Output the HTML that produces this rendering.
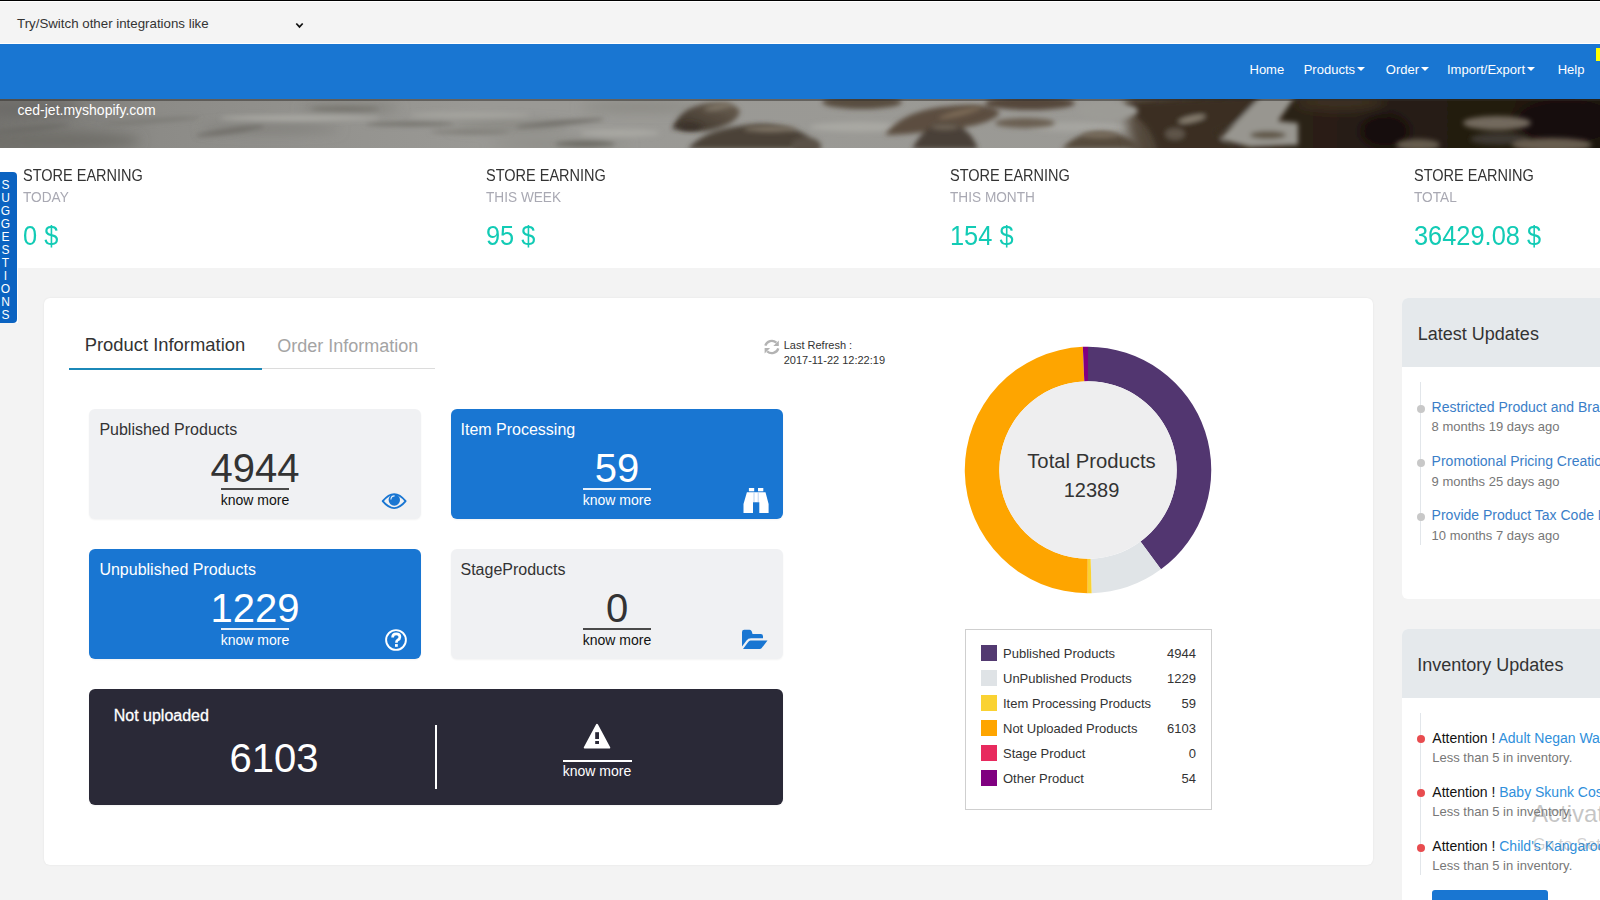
<!DOCTYPE html>
<html><head><meta charset="utf-8">
<style>
*{margin:0;padding:0;box-sizing:border-box}
html,body{width:1600px;height:900px;overflow:hidden;background:#fff;font-family:"Liberation Sans",sans-serif;color:#333}
.a{position:absolute;white-space:nowrap;line-height:1}
#topline{position:absolute;left:0;top:0;width:1600px;height:1px;background:#000}
#topbar{position:absolute;left:0;top:2px;width:1600px;height:41px;background:#f4f4f4}
#nav{position:absolute;left:0;top:44px;width:1600px;height:55px;background:#1976d2}
#banner{position:absolute;left:0;top:99px;width:1600px;height:49px;overflow:hidden;background:#8f8e89}
#graybg{position:absolute;left:18px;top:268px;width:1582px;height:632px;background:#f3f3f3}
#bottomgray{position:absolute;left:0;top:323px;width:18px;height:577px;background:#f3f3f3}
.nav{color:#fff;font-size:13px;top:62.6px}
.caret{display:inline-block;width:0;height:0;border-left:4px solid transparent;border-right:4px solid transparent;border-top:4px solid #fff;vertical-align:middle;margin-left:2px;position:relative;top:-1px}
.etitle{font-size:16px;top:168px;color:#333;transform-origin:0 0;transform:scaleX(0.907)}
.esub{font-size:15px;top:189.3px;color:#a9a9b3;transform-origin:0 0;transform:scaleX(0.91)}
.eval{font-size:27px;top:222.9px;color:#12cbb5;transform-origin:0 0;transform:scaleX(0.94)}
#sugg{position:absolute;left:0;top:172px;width:17.3px;height:151px;background:#0b63c1;border-radius:0 4px 4px 0}
.sl{position:absolute;left:-3.5px;width:18px;text-align:center;color:#fff;font-size:12px;line-height:1}
#card{position:absolute;left:44px;top:298px;width:1329px;height:567px;background:#fff;border-radius:6px;box-shadow:0 0 2px rgba(0,0,0,0.08)}
.box{position:absolute;border-radius:6px;box-shadow:0 1px 2px rgba(0,0,0,0.05)}
.gbox{background:#f0f1f3;color:#333}
.bbox{background:#1976d2;color:#fff}
.btitle{font-size:16px}
.gbox~.btitle{}
.bnum{font-size:40px;text-align:center}
.bmore{font-size:14px;text-align:center}
.legsq{position:absolute;left:981px;width:16px;height:16px}
.legl{font-size:13px;left:1003px;color:#333}
.legn{font-size:13px;color:#333;text-align:right;width:80px;left:1116px}
#upd1{position:absolute;left:1402px;top:298px;width:220px;height:301px;background:#fff;border-radius:6px 0 0 6px;overflow:hidden}
#upd2{position:absolute;left:1402px;top:629px;width:220px;height:300px;background:#fff;border-radius:6px 0 0 6px;overflow:hidden}
.uhead{position:absolute;left:0;top:0;width:100%;height:69px;background:#e5e9ec}
.utitle{font-size:18px;color:#333}
.ulink{font-size:14px;color:#3a7ec8}
.utime{font-size:13px;color:#777}
.dot{position:absolute;width:8px;height:8px;border-radius:50%}
</style></head><body>
<div id="topline"></div>
<div id="topbar"></div>
<div class="a" style="left:17px;top:16.7px;font-size:13.3px;color:#333">Try/Switch other integrations like</div>
<svg class="a" style="left:295px;top:22.3px" width="9" height="7" viewBox="0 0 9 7"><path d="M1.3 1.5 L4.5 4.9 L7.7 1.5" stroke="#111" stroke-width="1.7" fill="none"/></svg>

<div id="nav"></div>
<div class="a nav" style="left:1249.5px">Home</div>
<div class="a nav" style="left:1303.7px">Products<span class="caret"></span></div>
<div class="a nav" style="left:1385.8px">Order<span class="caret"></span></div>
<div class="a nav" style="left:1447px">Import/Export<span class="caret"></span></div>
<div class="a nav" style="left:1557.7px">Help</div>
<div class="a" style="left:1595.7px;top:48.3px;width:5px;height:12.5px;background:#ffff00"></div>

<div id="banner"><!--B--><svg width="1600" height="49" viewBox="0 0 1600 49" style="display:block">
<defs>
<filter id="b2" filterUnits="userSpaceOnUse" x="-50" y="-50" width="1700" height="150"><feGaussianBlur stdDeviation="2.5"/></filter>
<filter id="b4" filterUnits="userSpaceOnUse" x="-50" y="-50" width="1700" height="150"><feGaussianBlur stdDeviation="4"/></filter>
<filter id="b6" filterUnits="userSpaceOnUse" x="-50" y="-50" width="1700" height="150"><feGaussianBlur stdDeviation="6"/></filter>
<linearGradient id="lg" x1="0" x2="1" y1="0" y2="0">
<stop offset="0" stop-color="#74736f"/><stop offset="0.1" stop-color="#8c8b87"/><stop offset="0.3" stop-color="#9a9995"/><stop offset="1" stop-color="#9b9a95"/>
</linearGradient>
<linearGradient id="rk" x1="0" x2="1" y1="1" y2="0">
<stop offset="0" stop-color="#3a3128"/><stop offset="1" stop-color="#6b6052"/>
</linearGradient>
<linearGradient id="rg" gradientUnits="userSpaceOnUse" x1="1125" x2="1600" y1="0" y2="0"><stop offset="0" stop-color="#5a4f42"/><stop offset="0.16" stop-color="#3e3327"/><stop offset="0.36" stop-color="#2a2015"/><stop offset="1" stop-color="#1f170e"/></linearGradient>
</defs>
<rect width="1600" height="49" fill="url(#lg)"/>
<g filter="url(#b6)">
<ellipse cx="50" cy="42" rx="90" ry="9" fill="#6f6e69"/>
<ellipse cx="30" cy="10" rx="50" ry="8" fill="#6c6b67"/>
<ellipse cx="270" cy="30" rx="70" ry="4" fill="#7f7e79"/>
<ellipse cx="350" cy="9" rx="50" ry="4" fill="#7e7d77"/>
<ellipse cx="510" cy="27" rx="60" ry="4" fill="#83827c"/>
<ellipse cx="640" cy="8" rx="60" ry="4" fill="#878680"/>
<ellipse cx="560" cy="45" rx="70" ry="4" fill="#8b8a84"/>
</g>
<g filter="url(#b2)">
<ellipse cx="30" cy="30" rx="40" ry="2.5" fill="#6c6b66" transform="rotate(-6 30 30)"/>
<ellipse cx="150" cy="22" rx="50" ry="2" fill="#7a7974" transform="rotate(-4 150 22)"/>
<ellipse cx="230" cy="32" rx="35" ry="2.5" fill="#6f6d68" transform="rotate(-8 230 32)"/>
<ellipse cx="345" cy="10" rx="35" ry="2" fill="#73716b"/>
<ellipse cx="410" cy="25" rx="45" ry="2" fill="#706e68"/>
<ellipse cx="470" cy="33" rx="40" ry="2" fill="#7e7c76"/>
<ellipse cx="560" cy="24" rx="45" ry="2.2" fill="#6e6c66" transform="rotate(-5 560 24)"/>
<ellipse cx="585" cy="45" rx="30" ry="3" fill="#6c6a64"/>
<ellipse cx="300" cy="19" rx="80" ry="3" fill="#a9a8a3"/>
<ellipse cx="470" cy="16" rx="60" ry="3" fill="#a5a49f"/>
<ellipse cx="620" cy="34" rx="40" ry="4" fill="#a8a7a2"/>
<ellipse cx="860" cy="28" rx="50" ry="5" fill="#a9a8a3"/>
<ellipse cx="1080" cy="28" rx="50" ry="5" fill="#a6a5a0"/>
</g>
<g filter="url(#b2)">
<path d="M672 30 Q680 8 708 4 Q735 2 740 12 Q738 26 705 32 Z" fill="url(#rk)"/>
<path d="M688 50 Q705 28 760 25 Q805 26 822 50 Z" fill="#4b4238"/>
<ellipse cx="806" cy="47" rx="15" ry="9" fill="#5a5147"/>
<ellipse cx="862" cy="3" rx="40" ry="7" fill="#594e41"/>
<path d="M885 36 Q900 14 940 8 Q990 2 1000 14 Q990 28 930 32 Q905 36 885 36Z" fill="#5b4e3f"/>
<path d="M912 50 Q925 25 945 24 Q970 26 978 50Z" fill="#4a4138"/>
<ellipse cx="1030" cy="4" rx="45" ry="7" fill="#54473a"/>
<ellipse cx="1025" cy="24" rx="30" ry="5" fill="#6a5f51"/>
<path d="M1062 50 Q1075 34 1100 33 Q1130 34 1142 50Z" fill="#574b3d"/>
</g>
<g filter="url(#b6)">
<path d="M1128 -20 L1650 -20 L1650 70 L1140 70 Q1122 30 1128 -20Z" fill="url(#rg)"/>
<ellipse cx="1340" cy="3" rx="45" ry="8" fill="#3d3024"/>
<ellipse cx="1565" cy="22" rx="50" ry="22" fill="#130d08"/>
<ellipse cx="1385" cy="32" rx="25" ry="18" fill="#150f09"/>

</g>
<g filter="url(#b2)">
<path d="M1125 4 L1262 -2 L1240 22 L1214 33 L1232 52 L1158 52 Q1150 22 1125 11 Z" fill="#3a2f24"/><ellipse cx="1192" cy="20" rx="14" ry="3" fill="#8a8172" transform="rotate(-12 1192 20)"/><ellipse cx="1175" cy="35" rx="10" ry="6" fill="#5e5549"/>
<path d="M1262 -4 L1296 -4 L1278 22 L1298 24 L1298 46 L1250 48 L1220 40 Z" fill="#989690"/>
<ellipse cx="1268" cy="36" rx="18" ry="4" fill="#5e5444"/>
<ellipse cx="1497" cy="24" rx="34" ry="7" fill="#72695d"/>
<ellipse cx="1500" cy="40" rx="30" ry="6" fill="#3c3833"/>
<ellipse cx="1418" cy="46" rx="22" ry="6" fill="#655b4d"/>
<ellipse cx="1552" cy="46" rx="40" ry="7" fill="#675d4f"/>
</g>
<g filter="url(#b2)">
<ellipse cx="718" cy="8" rx="14" ry="3" fill="#7e7466" transform="rotate(-10 718 8)"/>
<ellipse cx="770" cy="30" rx="26" ry="3" fill="#7f7566"/>
<ellipse cx="690" cy="28" rx="12" ry="4" fill="#3b332b"/>
<ellipse cx="945" cy="28" rx="14" ry="3" fill="#6f6557"/>
<ellipse cx="960" cy="14" rx="22" ry="3" fill="#7b6b57" transform="rotate(-14 960 14)"/>
<ellipse cx="1100" cy="36" rx="18" ry="3" fill="#7a6e5e"/>
<ellipse cx="1108" cy="12" rx="30" ry="9" fill="#9c9b96"/>
</g>
<rect width="1600" height="2" fill="#2f2c28" opacity="0.5"/>
</svg><!--/B-->
</div>
<div class="a" style="left:17.5px;top:102.6px;font-size:14px;color:#fff">ced-jet.myshopify.com</div>

<div class="a etitle" style="left:23px">STORE EARNING</div>
<div class="a esub" style="left:23px">TODAY</div>
<div class="a eval" style="left:23px">0 $</div>
<div class="a etitle" style="left:485.8px">STORE EARNING</div>
<div class="a esub" style="left:485.8px">THIS WEEK</div>
<div class="a eval" style="left:485.8px">95 $</div>
<div class="a etitle" style="left:950px">STORE EARNING</div>
<div class="a esub" style="left:950px">THIS MONTH</div>
<div class="a eval" style="left:950px">154 $</div>
<div class="a etitle" style="left:1414px">STORE EARNING</div>
<div class="a esub" style="left:1414px">TOTAL</div>
<div class="a eval" style="left:1414px">36429.08 $</div>

<div id="graybg"></div>
<div id="bottomgray"></div>
<div id="sugg">
<div class="sl" style="top:7px">S</div>
<div class="sl" style="top:20px">U</div>
<div class="sl" style="top:33px">G</div>
<div class="sl" style="top:46px">G</div>
<div class="sl" style="top:59px">E</div>
<div class="sl" style="top:72px">S</div>
<div class="sl" style="top:85px">T</div>
<div class="sl" style="top:98px">I</div>
<div class="sl" style="top:111px">O</div>
<div class="sl" style="top:124px">N</div>
<div class="sl" style="top:137px">S</div>
</div>

<div id="card"></div>
<!-- tabs -->
<div class="a" style="left:84.7px;top:336.3px;font-size:18.4px;color:#333">Product Information</div>
<div class="a" style="left:277.2px;top:336.7px;font-size:18px;color:#a4a4a4">Order Information</div>
<div class="a" style="left:69px;top:368px;width:366px;height:1px;background:#dcdcdc"></div>
<div class="a" style="left:69px;top:368px;width:193px;height:2px;background:#1b88b8"></div>

<!-- last refresh -->
<svg class="a" style="left:760px;top:336px" width="24" height="22" viewBox="0 0 24 22"><path d="M5.3 9.7 A6.8 6.8 0 0 1 16.4 6.6" stroke="#b3b3b3" stroke-width="2.3" fill="none"/><path d="M18.8 4.4 V9.9 H13.3Z" fill="#b3b3b3"/><path d="M18.3 12.3 A6.8 6.8 0 0 1 7.2 15.4" stroke="#b3b3b3" stroke-width="2.3" fill="none"/><path d="M4.6 12.1 H10.1 L4.6 17.6Z" fill="#b3b3b3"/></svg>
<div class="a" style="left:783.7px;top:340px;font-size:11px;color:#333">Last Refresh :</div>
<div class="a" style="left:783.7px;top:355.3px;font-size:11px;color:#333">2017-11-22 12:22:19</div>

<!-- boxes -->
<div class="box gbox" style="left:89px;top:409px;width:332px;height:110px"></div>
<div class="a btitle" style="left:99.4px;top:421.5px;color:#333">Published Products</div>
<div class="a bnum" style="left:155px;top:448.1px;width:200px;color:#333">4944</div>
<div class="a" style="left:221px;top:488px;width:68px;height:2px;background:#4a4a4a"></div>
<div class="a bmore" style="left:205px;top:492.7px;width:100px;color:#111">know more</div>
<svg class="a" style="left:376px;top:486px" width="36" height="30" viewBox="0 0 36 30"><path d="M6.7 15.2 Q18.2 1.0 29.6 15.2 Q18.2 29.0 6.7 15.2Z" fill="none" stroke="#1976d2" stroke-width="1.9" stroke-linejoin="round"/><circle cx="18.3" cy="14" r="5.7" fill="#1976d2"/><path d="M14.9 13.6 A3.8 3.8 0 0 1 18.6 9.9" fill="none" stroke="#fff" stroke-width="1.1" opacity="0.9"/></svg>

<div class="box bbox" style="left:451px;top:409px;width:332px;height:110px"></div>
<div class="a btitle" style="left:460.5px;top:421.5px;color:#fff">Item Processing</div>
<div class="a bnum" style="left:517px;top:448.1px;width:200px;color:#fff">59</div>
<div class="a" style="left:583px;top:488px;width:68px;height:2px;background:rgba(255,255,255,0.9)"></div>
<div class="a bmore" style="left:567px;top:492.7px;width:100px;color:#fff">know more</div>
<svg class="a" style="left:740px;top:485px" width="30" height="30" viewBox="0 0 30 30"><rect x="8.9" y="3" width="5.3" height="3.3" fill="#fff"/><rect x="18" y="3" width="5.3" height="3.3" fill="#fff"/><path d="M6.9 7.2 H25.5 L28.6 19 V28 H19.3 V17.2 H13 V28 H3.5 V19 Z" fill="#fff"/><path d="M14 7.5V17M18.2 7.5V17" stroke="#9cc0ec" stroke-width="0.7"/></svg>

<div class="box bbox" style="left:89px;top:549px;width:332px;height:110px"></div>
<div class="a btitle" style="left:99.4px;top:561.5px;color:#fff">Unpublished Products</div>
<div class="a bnum" style="left:155px;top:588.2px;width:200px;color:#fff">1229</div>
<div class="a" style="left:221px;top:628px;width:68px;height:2px;background:rgba(255,255,255,0.9)"></div>
<div class="a bmore" style="left:205px;top:632.7px;width:100px;color:#fff">know more</div>
<svg class="a" style="left:384px;top:628.4px" width="24" height="24" viewBox="-12 -12 24 24"><circle r="9.9" fill="none" stroke="#fff" stroke-width="1.9"/><path d="M-3.4 -2.6 Q-3.4 -6.2 0.2 -6.2 Q3.9 -6.2 3.9 -3.1 Q3.9 -1.1 1.6 0.1 Q0.4 0.8 0.4 2.8" fill="none" stroke="#fff" stroke-width="2.7"/><rect x="-1.0" y="4.1" width="2.8" height="2.7" fill="#fff"/></svg>

<div class="box gbox" style="left:451px;top:549px;width:332px;height:110px"></div>
<div class="a btitle" style="left:460.5px;top:561.5px;color:#333">StageProducts</div>
<div class="a bnum" style="left:517px;top:588.2px;width:200px;color:#333">0</div>
<div class="a" style="left:583px;top:628px;width:68px;height:2px;background:#4a4a4a"></div>
<div class="a bmore" style="left:567px;top:632.7px;width:100px;color:#111">know more</div>
<svg class="a" style="left:735px;top:622px" width="40" height="34" viewBox="0 0 40 34"><path d="M7 10 Q7 7.7 9.3 7.7 H14.5 Q16.7 7.7 17.5 11.9 H25.8 Q28 11.9 28 14.3 V16.3 H16 Q13 16.3 11.5 18.5 L7 24.5 Z" fill="#1976d2"/><path d="M15.5 18.6 H32.5 L26.5 26.3 Q25.8 27 24.8 27 H8 L13 20.2 Q14 18.6 15.5 18.6 Z" fill="#1976d2"/></svg>

<div class="box" style="left:89px;top:689px;width:694px;height:116px;background:#2a2937"></div>
<div class="a" style="left:113.7px;top:707.5px;font-size:16px;color:#fff;-webkit-text-stroke:0.3px #fff">Not uploaded</div>
<div class="a bnum" style="left:174px;top:737.9px;width:200px;color:#fff">6103</div>
<div class="a" style="left:435px;top:725px;width:1.5px;height:63.5px;background:#fff"></div>
<svg class="a" style="left:583px;top:723px" width="28" height="26" viewBox="0 0 28 26"><path d="M14 1.8 L26.3 24.6 H1.7Z" fill="#fff" stroke="#fff" stroke-linejoin="round" stroke-width="2"/><rect x="12.2" y="9.2" width="3.8" height="6.8" fill="#2a2937"/><rect x="12.2" y="18" width="3.8" height="3" fill="#2a2937"/></svg>
<div class="a" style="left:563px;top:760px;width:68.5px;height:1.5px;background:#fff"></div>
<div class="a bmore" style="left:547px;top:763.8px;width:100px;color:#fff">know more</div>

<!-- donut -->
<svg class="a" style="left:960.35px;top:342.4px" width="256" height="256" viewBox="-128 -128 256 256"><path d="M0.00 -123.25A123.25 123.25 0 0 1 72.97 99.33L52.51 71.49A88.7 88.7 0 0 0 0.00 -88.70Z" fill="#523670"/><path d="M72.97 99.33A123.25 123.25 0 0 1 3.66 123.20L2.63 88.66A88.7 88.7 0 0 0 52.51 71.49Z" fill="#e0e4e7"/><path d="M3.66 123.20A123.25 123.25 0 0 1 -0.43 123.25L-0.31 88.70A88.7 88.7 0 0 0 2.63 88.66Z" fill="#fad232"/><path d="M-0.43 123.25A123.25 123.25 0 0 1 -5.16 -123.14L-3.71 -88.62A88.7 88.7 0 0 0 -0.31 88.70Z" fill="#fea500"/><path d="M-5.16 -123.14A123.25 123.25 0 0 1 -0.00 -123.25L-0.00 -88.70A88.7 88.7 0 0 0 -3.71 -88.62Z" fill="#800080"/><circle r="88.7" fill="#eeeeef"/></svg>
<div class="a" style="left:991.5px;top:451px;width:200px;text-align:center;font-size:20.3px;color:#333">Total Products</div>
<div class="a" style="left:991.5px;top:479.6px;width:200px;text-align:center;font-size:20px;color:#333">12389</div>

<!-- legend -->
<div class="a" style="left:965px;top:629px;width:247px;height:181px;border:1px solid #cfcfcf"></div>
<div class="legsq" style="top:644.5px;background:#533a71"></div>
<div class="legsq" style="top:669.5px;background:#dfe3e6"></div>
<div class="legsq" style="top:694.5px;background:#fad232"></div>
<div class="legsq" style="top:719.5px;background:#fea500"></div>
<div class="legsq" style="top:744.5px;background:#e82a5e"></div>
<div class="legsq" style="top:769.5px;background:#800080"></div>
<div class="a legl" style="top:647.2px">Published Products</div>
<div class="a legl" style="top:672.2px">UnPublished Products</div>
<div class="a legl" style="top:697.2px">Item Processing Products</div>
<div class="a legl" style="top:722.2px">Not Uploaded Products</div>
<div class="a legl" style="top:747.2px">Stage Product</div>
<div class="a legl" style="top:772.2px">Other Product</div>
<div class="a legn" style="top:647.2px">4944</div>
<div class="a legn" style="top:672.2px">1229</div>
<div class="a legn" style="top:697.2px">59</div>
<div class="a legn" style="top:722.2px">6103</div>
<div class="a legn" style="top:747.2px">0</div>
<div class="a legn" style="top:772.2px">54</div>

<!-- right column -->
<div id="upd1"><div class="uhead"></div></div>
<div class="a utitle" style="left:1417.8px;top:324.8px">Latest Updates</div>
<div class="a" style="left:1420px;top:382px;width:1px;height:163px;background:#e2e6ea"></div>
<div class="dot" style="left:1416.5px;top:404.5px;background:#c8c8c8"></div>
<div class="dot" style="left:1416.5px;top:458.5px;background:#c8c8c8"></div>
<div class="dot" style="left:1416.5px;top:512.5px;background:#c8c8c8"></div>
<div class="a ulink" style="left:1431.6px;top:399.8px">Restricted Product and Brand Approval</div>
<div class="a utime" style="left:1431.6px;top:420.4px">8 months 19 days ago</div>
<div class="a ulink" style="left:1431.6px;top:454px">Promotional Pricing Creation</div>
<div class="a utime" style="left:1431.6px;top:474.6px">9 months 25 days ago</div>
<div class="a ulink" style="left:1431.6px;top:508.2px">Provide Product Tax Code Details</div>
<div class="a utime" style="left:1431.6px;top:528.8px">10 months 7 days ago</div>

<div id="upd2"><div class="uhead"></div></div>
<div class="a utitle" style="left:1417.3px;top:655.5px">Inventory Updates</div>
<div class="a" style="left:1420px;top:713px;width:1px;height:162px;background:#e2e6ea"></div>
<div class="dot" style="left:1416.7px;top:735px;background:#e84c4f"></div>
<div class="dot" style="left:1416.7px;top:789.3px;background:#e84c4f"></div>
<div class="dot" style="left:1416.7px;top:843.7px;background:#e84c4f"></div>
<div class="a" style="left:1432.3px;top:730.8px;font-size:14px;color:#111">Attention ! <span style="color:#2f8fdb">Adult Negan Walking Dead</span></div>
<div class="a utime" style="left:1432.3px;top:750.7px">Less than 5 in inventory.</div>
<div class="a" style="left:1432.3px;top:785.1px;font-size:14px;color:#111">Attention ! <span style="color:#2f8fdb">Baby Skunk Costume</span></div>
<div class="a utime" style="left:1432.3px;top:805px">Less than 5 in inventory.</div>
<div class="a" style="left:1432.3px;top:839.4px;font-size:14px;color:#111">Attention ! <span style="color:#2f8fdb">Child's Kangaroo Costume</span></div>
<div class="a utime" style="left:1432.3px;top:859.3px">Less than 5 in inventory.</div>
<div class="a" style="left:1432px;top:890px;width:116px;height:20px;background:#1976d2;border-radius:3px"></div>

<!-- watermark -->
<div class="a" style="left:1532px;top:802px;font-size:24px;color:rgba(140,140,140,0.5)">Activate Windows</div>
<div class="a" style="left:1533px;top:836.5px;font-size:16px;color:rgba(120,120,120,0.35)">Go to Settings to activate Windows.</div>
</body></html>
